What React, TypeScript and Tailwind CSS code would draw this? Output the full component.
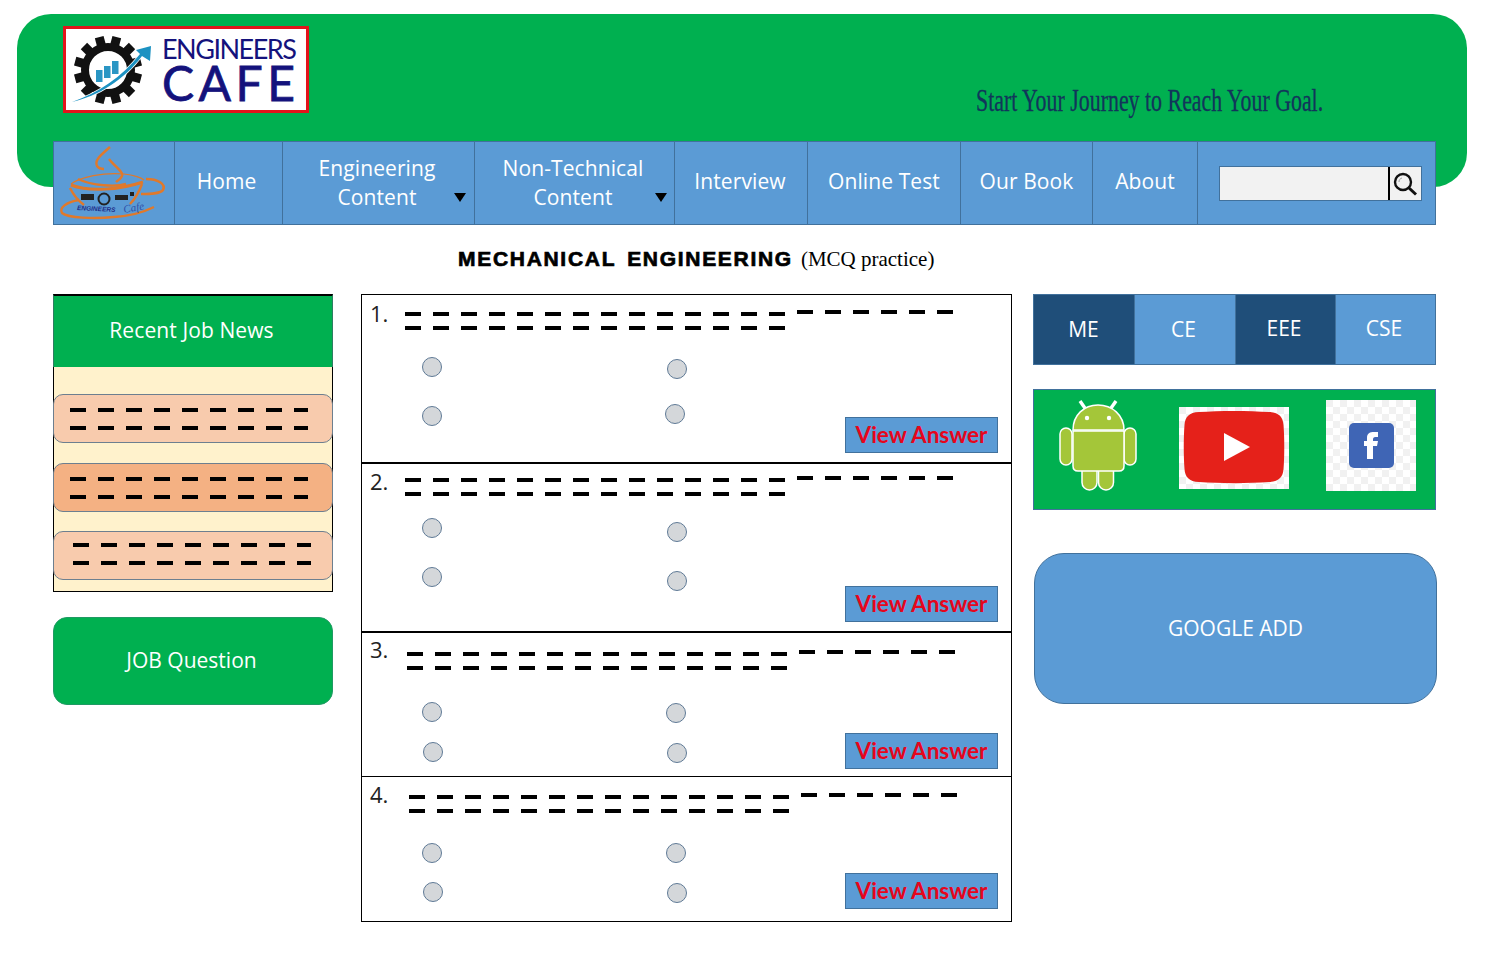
import React from 'react';

const navItems = [
  { label: ['Home'], cell: 'w-[108px] pb-[3px] pr-[4px]' },
  { label: ['Engineering', 'Content'], cell: 'w-[192px] pr-[3px]', caret: 'right-[8px]' },
  { label: ['Non-Technical', 'Content'], cell: 'w-[200px] pr-[3px]', caret: 'right-[7px]' },
  { label: ['Interview'], cell: 'w-[133px] pb-[3px] pr-[2px]' },
  { label: ['Online Test'], cell: 'w-[153px] pb-[3px]' },
  { label: ['Our Book'], cell: 'w-[132px] pb-[3px]' },
  { label: ['About'], cell: 'w-[105px] pb-[3px]' },
];

const questions = [
  {
    n: '1.', h: 'h-[169px] border-b-2', num: 'w-[35px] pt-[3px]', dash: 'pt-[17px]',
    left: ['mt-[18px]', 'mt-[29px]'], right: ['mt-[20px]', 'mt-[25px] -ml-[2px]'], btn: 'mb-[9px]',
  },
  {
    n: '2.', h: 'h-[169px] border-b-2', num: 'w-[35px] pt-[2px]', dash: 'pt-[14px]',
    left: ['mt-[10px]', 'mt-[29px]'], right: ['mt-[14px]', 'mt-[29px]'], btn: 'mb-[9px]',
  },
  {
    n: '3.', h: 'h-[144px] border-b', num: 'w-[37px] pt-[1px]', dash: 'pt-[19px]',
    left: ['mt-[25px]', 'mt-[20px] ml-[1px]'], right: ['mt-[26px] -ml-[1px]', 'mt-[20px]'], btn: 'mb-[7px]',
  },
  {
    n: '4.', h: 'h-[144px]', num: 'w-[39px] pt-[2px]', dash: 'pt-[18px]',
    left: ['mt-[22px]', 'mt-[19px] ml-[1px]'], right: ['mt-[22px] -ml-[1px]', 'mt-[20px]'], btn: 'mb-[12px]',
  },
];

const tabs = [
  { label: 'ME', cls: 'bg-[#1f4e79] w-[101px] pt-[1px] pr-[1px]' },
  { label: 'CE', cls: 'bg-[#5b9bd5] w-[101px] pt-[1px] pr-[3px]' },
  { label: 'EEE', cls: 'bg-[#1f4e79] w-[100px] pb-[1px] pr-[3px]' },
  { label: 'CSE', cls: 'bg-[#5b9bd5] flex-1 pb-[1px] pr-[3px]' },
];

const cards = [
  { bg: 'bg-[#f8cbad]', cls: 'pl-[16px]' },
  { bg: 'bg-[#f4b183]', cls: 'pl-[16px]' },
  { bg: 'bg-[#f8cbad]', cls: 'pl-[19px] -mt-[1px] pb-[4px]' },
];

function Dashes({ count, narrowLast }: { count: number; narrowLast?: boolean }) {
  return (
    <div className="flex gap-3">
      {[...Array(count)].map((_, i) => (
        <div key={i} className={`h-1 bg-black ${narrowLast && i === count - 1 ? 'w-[14px]' : 'w-4'}`} />
      ))}
    </div>
  );
}

function Radio({ className }: { className?: string }) {
  return <div className={`w-5 h-5 shrink-0 rounded-full bg-[#d4d7da] border border-[#5f7a96] ${className ?? ''}`} />;
}

function Gear() {
  const teeth = [...Array(12)].map((_, i) => i * 30);
  return (
    <svg width="92" height="80" viewBox="0 0 92 80" className="shrink-0">
      <g transform="translate(42 40)">
        {teeth.map((a) => (
          <rect key={a} x="-4.5" y="-34" width="9" height="12" fill="#111" transform={`rotate(${a + 15})`} />
        ))}
        <circle r="23" fill="none" stroke="#111" strokeWidth="8" />
      </g>
      <rect x="30" y="40" width="6.5" height="12" fill="#2a96c4" />
      <rect x="38" y="36" width="6.5" height="12" fill="#2a96c4" />
      <rect x="46" y="31" width="6.5" height="13" fill="#2a96c4" />
      <path d="M6 72 C32 66 58 50 76 26 L84 31 L85 16 L70 20 L74 24 C56 47 32 63 6 72Z" fill="#1c92c2" stroke="#fff" strokeWidth="1.5" paintOrder="stroke" />
    </svg>
  );
}

function CupLogo() {
  return (
    <svg width="120" height="82" viewBox="0 0 120 82">
      <g fill="none" stroke="#e0792b">
        <path d="M56 5 C48 12 40 18 43 24 C45 27 49 27 50 27" strokeWidth="2.4" />
        <path d="M55 17 C60 24 70 30 68 34 C67 37 63 39 62 40" strokeWidth="2.4" />
        <path d="M17 42 C26 35 50 30 70 32 C80 33 88 36 90 38" strokeWidth="1.2" />
        <path d="M17 43 C35 50 65 48 89 40" strokeWidth="3" />
        <path d="M24 37 C38 44 62 45 72 42" strokeWidth="2.4" />
        <path d="M16 46 C20 54 26 60 30 63" strokeWidth="2.4" />
        <path d="M88 42 C85 50 81 57 76 62" strokeWidth="2.4" />
        <path d="M92 37 C104 37 112 42 109 48 C106 52 96 52 87 52" strokeWidth="2.6" />
        <path d="M25 58 C12 60 5 66 8 71 C14 76 40 77 60 75 C75 74 90 70 100 65" strokeWidth="2.4" />
      </g>
      <rect x="27" y="52" width="13" height="6" fill="#222" />
      <circle cx="50" cy="57" r="5.5" fill="none" stroke="#222" strokeWidth="2" />
      <rect x="61" y="53" width="13" height="5" fill="#222" />
      <rect x="76" y="50" width="4" height="4" fill="#222" />
      <text x="23" y="68" fontSize="6.5" fontWeight="700" fontStyle="italic" fontFamily="Liberation Sans, sans-serif" fill="#1f2f8a" transform="rotate(3 23 68)">ENGINEERS</text>
      <text x="70" y="71" fontSize="11" fontFamily="Liberation Serif, serif" fontStyle="italic" fill="#2f4fa8" transform="rotate(-10 70 71)">Cafe</text>
    </svg>
  );
}

function SearchGlass() {
  return (
    <svg width="26" height="26" viewBox="0 0 26 26" fill="none" stroke="#111">
      <circle cx="10" cy="11" r="8" strokeWidth="2.4" />
      <path d="M16 17 L23 23.5" strokeWidth="3" />
      <path d="M6 11 C6 9 7 7.5 9 7" stroke="#888" strokeWidth="0.8" />
    </svg>
  );
}

function Android() {
  return (
    <svg width="78" height="91" viewBox="0 0 78 91" className="shrink-0">
      <g fill="#a4c639" stroke="#fff" strokeWidth="1.5">
        <path d="M21 1 L28 11" strokeWidth="3.4" stroke="#fff" />
        <path d="M57 1 L50 11" strokeWidth="3.4" stroke="#fff" />
        <path d="M14 30 C14 15 25 5 39 5 C53 5 65 15 65 30Z" />
        <rect x="1" y="28" width="12" height="37" rx="6" />
        <rect x="65" y="28" width="12" height="37" rx="6" />
        <rect x="23" y="60" width="15" height="30" rx="7.5" />
        <rect x="39.5" y="60" width="15" height="30" rx="7.5" />
        <path d="M14 31 H65 V66 C65 69 63 71 60 71 H19 C16 71 14 69 14 66Z" />
      </g>
      <circle cx="28" cy="18" r="2.2" fill="#fff" />
      <circle cx="50" cy="18" r="2.2" fill="#fff" />
    </svg>
  );
}

function Checker({ id, w, h, children }: { id: string; w: number; h: number; children: React.ReactNode }) {
  return (
    <svg width={w} height={h} viewBox={`0 0 ${w} ${h}`} className="shrink-0">
      <defs>
        <pattern id={id} width="14" height="14" patternUnits="userSpaceOnUse">
          <rect width="14" height="14" fill="#fff" />
          <rect width="7" height="7" fill="#f1f1f1" />
          <rect x="7" y="7" width="7" height="7" fill="#f1f1f1" />
        </pattern>
      </defs>
      <rect width={w} height={h} fill={`url(#${id})`} />
      {children}
    </svg>
  );
}

export default function App() {
  return (
    <div className="relative w-[1488px] h-[960px] overflow-hidden bg-white font-['Open_Sans',sans-serif]">
      {/* Green banner */}
      <div className="ml-[17px] mt-[14px] w-[1450px] h-[173px] rounded-[34px] bg-[#00b050] flex items-start">
        <div className="ml-[46px] mt-3 w-[246px] h-[87px] shrink-0 bg-white border-[3px] border-[#e3141b] flex items-center">
          <Gear />
          <div className="ml-[4px] flex flex-col text-[#14127c] font-['Lato',sans-serif]">
            <span className="text-[27px] tracking-[-1.5px] h-[28px] leading-[27px]">ENGINEERS</span>
            <span className="text-[48px] tracking-[4.5px] h-[42px] leading-[40px] [-webkit-text-stroke:0.8px_#14127c]">CAFE</span>
          </div>
        </div>
        <div className="ml-[667px] mt-[69px] shrink-0 font-['Liberation_Serif',serif] text-[32px] leading-[34px] text-[#12355b] whitespace-nowrap origin-left scale-x-[0.684] [-webkit-text-stroke:0.3px_#12355b]">
          Start Your Journey to Reach Your Goal.
        </div>
      </div>

      {/* Nav */}
      <nav className="relative ml-[53px] mt-[-46px] w-[1383px] h-[84px] flex bg-[#5b9bd5] border border-[#41719c] text-white">
        <div className="w-[121px] shrink-0 border-r border-[#41719c] flex items-center justify-center">
          <CupLogo />
        </div>
        {navItems.map((item) => (
          <div key={item.label[0]} className={`${item.cell} shrink-0 relative border-r border-[#41719c] flex flex-col items-center justify-center text-[21px] leading-[29px] tracking-[0.1px]`}>
            {item.label.map((l) => (
              <span key={l}>{l}</span>
            ))}
            {item.caret && (
              <span className={`absolute ${item.caret} top-[51px] w-0 h-0 border-x-[6px] border-x-transparent border-t-[9px] border-t-black`} />
            )}
          </div>
        ))}
        <div className="flex-1 flex items-center pl-[21px] pt-[1px]">
          <div className="w-[203px] h-[35px] flex border border-[#41719c] bg-[#f2f2f2]">
            <div className="w-[170px] border-r-2 border-black" />
            <div className="flex-1 flex items-center justify-center">
              <SearchGlass />
            </div>
          </div>
        </div>
      </nav>

      {/* Title */}
      <div className="ml-[458px] mt-[19px] h-[30px] flex items-center text-black whitespace-nowrap">
        <span className="font-['Liberation_Sans',sans-serif] font-bold text-[21px] tracking-[1.7px] [-webkit-text-stroke:0.7px_black]">MECHANICAL</span>
        <span className="ml-[11px] font-['Liberation_Sans',sans-serif] font-bold text-[21px] tracking-[1.7px] [-webkit-text-stroke:0.7px_black]">ENGINEERING</span>
        <span className="ml-[8px] mt-[2px] font-['Liberation_Serif',serif] text-[21px]">(MCQ practice)</span>
      </div>

      <div className="mt-[20px] ml-[53px] flex items-start">
        {/* Left column */}
        <div className="w-[280px] shrink-0">
          <div className="h-[73px] pb-[2px] bg-[#00b050] border-t-2 border-t-black border-x border-x-[#2e7d62] flex items-center justify-center text-white text-[21px] tracking-[0.1px] pr-[3px]">
            Recent Job News
          </div>
          <div className="h-[225px] bg-[#fff2cc] border border-black border-t-0 flex flex-col pt-[27px] gap-[20px]">
            {cards.map((c, i) => (
              <div key={i} className={`${c.bg} ${c.cls} -mx-[1px] h-[49px] rounded-[10px] border border-[#6d7f8f] flex flex-col justify-center gap-[14px]`}>
                <Dashes count={9} narrowLast />
                <Dashes count={9} narrowLast />
              </div>
            ))}
          </div>
          <div className="mt-[25px] h-[88px] rounded-[14px] bg-[#00b050] border border-[#1f9a63] flex items-center justify-center text-white text-[21px] pr-[3px]">
            JOB Question
          </div>
        </div>

        {/* Questions */}
        <div className="ml-[28px] w-[651px] h-[628px] border border-black shrink-0">
          {questions.map((q) => (
            <div key={q.n} className={`${q.h} border-black flex flex-col`}>
              <div className="h-[44px] shrink-0 flex pl-[8px]">
                <div className={`${q.num} text-[22px] leading-[30px] text-[#222]`}>{q.n}</div>
                <div className={q.dash}>
                  <div className="flex gap-3 items-start">
                    <Dashes count={14} />
                    <div className="-mt-[2px]">
                      <Dashes count={6} />
                    </div>
                  </div>
                  <div className="mt-[10px]">
                    <Dashes count={14} />
                  </div>
                </div>
              </div>
              <div className="flex-1 flex">
                <div className="ml-[60px] w-5 flex flex-col">
                  {q.left.map((c, i) => (
                    <Radio key={i} className={c} />
                  ))}
                </div>
                <div className="ml-[225px] w-5 flex flex-col">
                  {q.right.map((c, i) => (
                    <Radio key={i} className={c} />
                  ))}
                </div>
                <button className={`${q.btn} ml-auto mr-[13px] self-end w-[153px] h-[36px] pb-[1px] bg-[#5b9bd5] border border-[#41719c] text-[#e6051c] font-['Lato',sans-serif] text-[22.5px] font-bold`}>
                  View Answer
                </button>
              </div>
            </div>
          ))}
        </div>

        {/* Right column */}
        <div className="ml-[21px] w-[403px] shrink-0">
          <div className="h-[71px] flex border border-[#41719c] text-white text-[21px]">
            {tabs.map((t) => (
              <div key={t.label} className={`${t.cls} border-r last:border-r-0 border-[#41719c] flex items-center justify-center`}>
                {t.label}
              </div>
            ))}
          </div>
          <div className="mt-[24px] h-[121px] bg-[#00b050] border border-[#41719c] flex items-start">
            <div className="ml-[25px] mt-[10px]">
              <Android />
            </div>
            <div className="ml-[42px] mt-[17px]">
              <Checker id="yt" w={110} h={82}>
                <path d="M20 5 C40 3.5 70 3.5 90 5 C100 5.5 104 10 104.5 18 C105.5 30 105.5 50 104.5 62 C104 70 100 74.5 90 75 C70 76.5 40 76.5 20 75 C10 74.5 6 70 5.5 62 C4.5 50 4.5 30 5.5 18 C6 10 10 5.5 20 5Z" fill="#e5211a" />
                <path d="M45 26 L71 40 L45 54Z" fill="#fff" />
              </Checker>
            </div>
            <div className="ml-[37px] mt-[10px]">
              <Checker id="fb" w={90} h={91}>
                <rect x="23" y="23" width="45" height="45" rx="5" fill="#3f65b5" />
                <path d="M41 59 V46 H38 V41 H41 V38 C41 33 44 32 48 32 H52 V37 H49.5 C47.5 37 47 38 47 39.5 V41 H52 L51 46 H47 V59Z" fill="#fff" />
              </Checker>
            </div>
          </div>
          <div className="mt-[43px] ml-[1px] w-[403px] h-[151px] rounded-[30px] bg-[#5b9bd5] border border-[#41719c] flex items-center justify-center text-white text-[21px]">
            GOOGLE ADD
          </div>
        </div>
      </div>
    </div>
  );
}
